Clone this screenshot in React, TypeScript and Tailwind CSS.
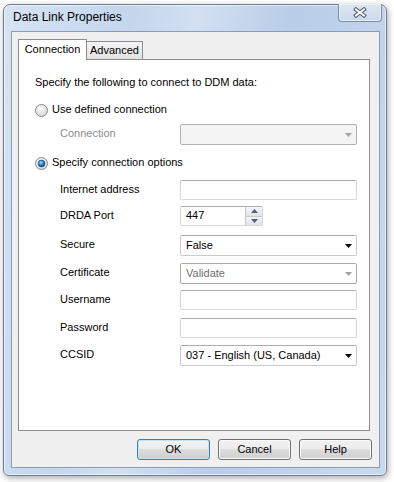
import React from 'react';

function Radio({ checked }: { checked?: boolean }) {
  return (
    <svg width="13" height="13" viewBox="0 0 13 13" className="shrink-0">
      <defs>
        <radialGradient id="rg" cx="0.4" cy="0.35" r="0.7">
          <stop offset="0" stopColor="#ffffff" />
          <stop offset="1" stopColor="#d2d2d2" />
        </radialGradient>
        <radialGradient id="dot" cx="0.4" cy="0.35" r="0.7">
          <stop offset="0" stopColor="#9fdcff" />
          <stop offset="0.5" stopColor="#2a8ad4" />
          <stop offset="1" stopColor="#0a3a6e" />
        </radialGradient>
      </defs>
      <circle cx="6.5" cy="6.5" r="6" fill="url(#rg)" stroke="#8a8a8a" strokeWidth="1" />
      {checked && <circle cx="6.5" cy="6.5" r="3.4" fill="url(#dot)" stroke="#1c3d63" strokeWidth="0.6" />}
    </svg>
  );
}

function Arrow({ disabled }: { disabled?: boolean }) {
  return (
    <svg width="7" height="4" viewBox="0 0 7 4" className="shrink-0">
      <path d="M0 0h7L3.5 4z" fill={disabled ? '#a3a3a3' : '#000'} />
    </svg>
  );
}

function TextBox() {
  return <div className="w-[177px] h-full bg-white border border-[#d5d9de] border-t-[#abadb3] rounded-[2px]" />;
}

function Combo({ value, disabled, muted }: { value?: string; disabled?: boolean; muted?: boolean }) {
  return (
    <div
      className={
        'w-[177px] h-full flex items-center pl-[5px] pr-[4px] rounded-[2px] border ' +
        (disabled
          ? 'bg-[#f4f4f4] border-[#adb2b5]'
          : muted
          ? 'bg-white border-[#a9a9a9] text-[#6d6d6d]'
          : 'bg-white border-[#c7cbd1] border-t-[#abadb3]')
      }
    >
      <span className="flex-1 pb-[1px]">{value}</span>
      <Arrow disabled={disabled || muted} />
    </div>
  );
}

function Spinner() {
  return (
    <div className="w-[83px] h-full flex bg-white border border-[#d5d9de] border-t-[#abadb3] rounded-[2px]">
      <span className="flex-1 pl-[5px] flex items-center pb-[1px]">447</span>
      <div className="w-[17px] flex flex-col border-l border-[#c4c8ce]">
        <div className="flex-1 flex items-center justify-center bg-[linear-gradient(#f4f6f9,#dfe3ea)] border-b border-[#c4c8ce]">
          <svg width="7" height="4" viewBox="0 0 7 4"><path d="M0 4h7L3.5 0z" fill="#4d6185" /></svg>
        </div>
        <div className="flex-1 flex items-center justify-center bg-[linear-gradient(#f4f6f9,#dfe3ea)]">
          <svg width="7" height="4" viewBox="0 0 7 4"><path d="M0 0h7L3.5 4z" fill="#4d6185" /></svg>
        </div>
      </div>
    </div>
  );
}

function Row({ label, h, mt, gray, children }: { label: string; h: string; mt: string; gray?: boolean; children: React.ReactNode }) {
  return (
    <div className={'flex items-center pl-[25px] ' + h + ' ' + mt}>
      <span className={'w-[120px] pb-[2px] ' + (gray ? 'text-[#8d8d8d]' : '')}>{label}</span>
      {children}
    </div>
  );
}

function Button({ label, primary }: { label: string; primary?: boolean }) {
  return (
    <div
      className={
        'w-[73px] h-[21px] flex items-center justify-center rounded-[3px] border bg-[linear-gradient(#f2f2f2_0%,#ebebeb_50%,#dddddd_50%,#cfcfcf_100%)] ' +
        (primary ? 'border-[#3c7fb1] shadow-[inset_0_0_0_1px_#bfe6f8]' : 'border-[#707070] shadow-[inset_0_0_0_1px_#fbfbfb]')
      }
    >
      <span className="pb-[1px]">{label}</span>
    </div>
  );
}

export default function App() {
  return (
    <div className="w-[394px] h-[482px] bg-white overflow-hidden text-[11px] text-black font-['Liberation_Sans',Arial,sans-serif]">
      <div className="ml-[3px] mt-[4px] w-[384px] h-[472px] flex flex-col rounded-t-[7px] rounded-b-[6px] border border-[#6e7f95] bg-[linear-gradient(100deg,#d6e3f4_0%,#c4d6ed_28%,#d3e0f2_42%,#b9cde8_62%,#c9daef_100%)] shadow-[1px_2px_6px_rgba(0,0,0,0.35),inset_0_0_0_1px_rgba(255,255,255,0.55)]">
        <div className="h-[26px] relative flex items-center pl-[9px] shrink-0">
          <span className="text-[12px] pb-[2px]">Data Link Properties</span>
          <div className="absolute right-[4px] top-[-1px] w-[44px] h-[18px] flex items-center justify-center rounded-b-[4px] border border-t-0 border-[#7d8ea6] bg-[linear-gradient(#dbe6f4,#cbdaee)] shadow-[inset_0_0_0_1px_rgba(255,255,255,0.5)]">
            <svg width="14" height="11" viewBox="0 0 14 11">
              <path d="M3 2.5l8 6M11 2.5l-8 6" stroke="#4a5566" strokeWidth="4" strokeLinecap="square" />
              <path d="M3 2.5l8 6M11 2.5l-8 6" stroke="#ffffff" strokeWidth="2" strokeLinecap="square" />
            </svg>
          </div>
        </div>
        <div className="ml-[7px] mr-[6px] mb-[7px] flex-1 flex flex-col border border-[#8b9db5] bg-[#f0f0f0] pl-[6px] pt-[7px]">
          <div className="flex items-end h-[20px]">
            <div className="relative z-10 w-[69px] h-[21px] mb-[-1px] bg-white border border-b-0 border-[#898c95] flex items-center justify-center">
              <span className="pb-[2px]">Connection</span>
            </div>
            <div className="-ml-px w-[57px] h-[18px] bg-[linear-gradient(#f4f4f4,#e3e3e3)] border border-b-0 border-[#898c95] flex items-center justify-center">
              <span>Advanced</span>
            </div>
          </div>
          <div className="w-[352px] h-[372px] bg-white border border-[#898c95] flex flex-col pl-[16px]">
            <div className="mt-[14px] h-[16px] flex items-center">Specify the following to connect to DDM data:</div>
            <div className="mt-[12px] h-[16px] flex items-center gap-[4px]">
              <Radio />
              <span className="pb-[1px]">Use defined connection</span>
            </div>
            <Row label="Connection" h="h-[21px]" mt="mt-[6px]" gray>
              <Combo disabled />
            </Row>
            <div className="mt-[10px] h-[16px] flex items-center gap-[4px]">
              <Radio checked />
              <span className="pb-[1px]">Specify connection options</span>
            </div>
            <Row label="Internet address" h="h-[20px]" mt="mt-[9px]">
              <TextBox />
            </Row>
            <Row label="DRDA Port" h="h-[20px]" mt="mt-[6px]">
              <Spinner />
            </Row>
            <Row label="Secure" h="h-[21px]" mt="mt-[9px]">
              <Combo value="False" />
            </Row>
            <Row label="Certificate" h="h-[21px]" mt="mt-[7px]">
              <Combo value="Validate" muted />
            </Row>
            <Row label="Username" h="h-[20px]" mt="mt-[6px]">
              <TextBox />
            </Row>
            <Row label="Password" h="h-[20px]" mt="mt-[8px]">
              <TextBox />
            </Row>
            <Row label="CCSID" h="h-[21px]" mt="mt-[7px]">
              <Combo value="037 - English (US, Canada)" />
            </Row>
          </div>
          <div className="mt-[8px] flex justify-end gap-[8px] pr-[7px]">
            <Button label="OK" primary />
            <Button label="Cancel" />
            <Button label="Help" />
          </div>
        </div>
      </div>
    </div>
  );
}
